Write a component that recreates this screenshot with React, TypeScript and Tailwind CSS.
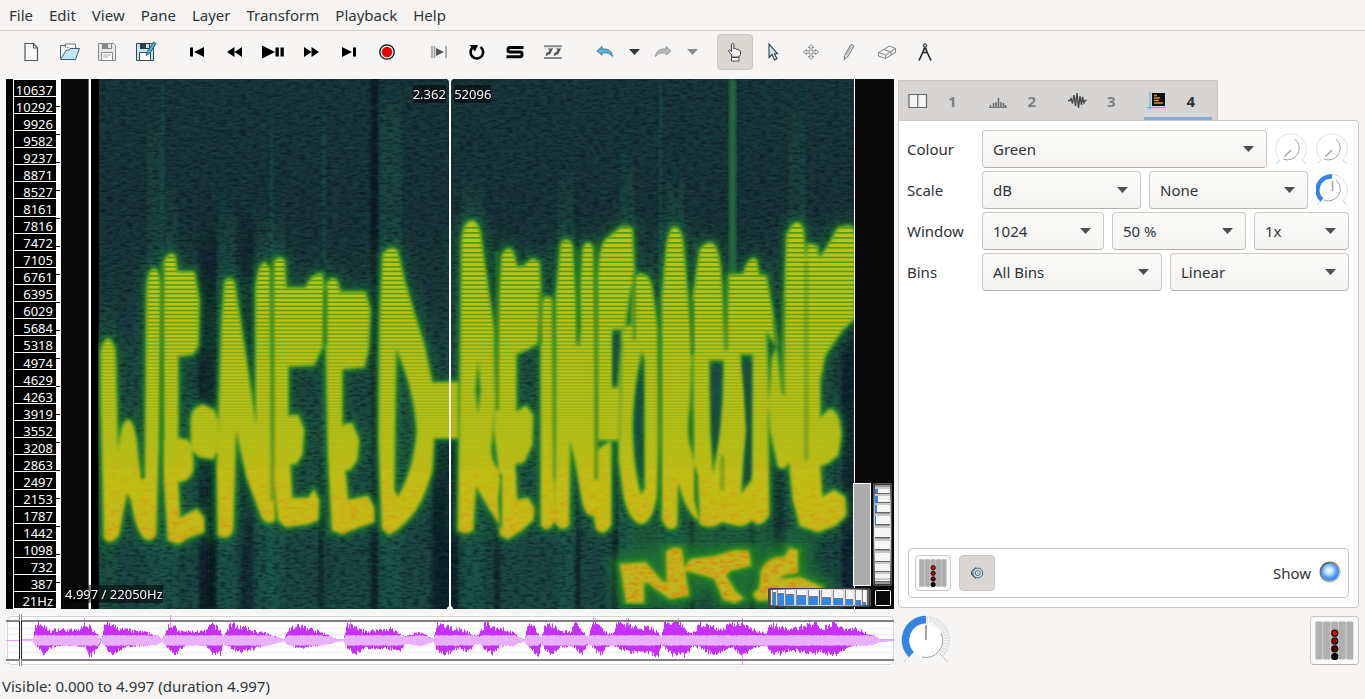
import React from "react";

const LETTERS = [
  "M101 350Q108 328 115 350L118 452Q121 421 128 420Q135 421 138 455L141 480L145 478L147 290Q148 269 154 269Q160 269 161 290L159 430L156 535Q150 543 144 538Q136 530 131 500L127 493Q122 515 119 535Q110 546 104 538L101 400Z",
  "M163 300L164 262Q170 250 175 256L177 272L194 272L199 300L198 345L193 354L178 356L178 438L188 440Q194 450 193 470Q190 481 178 482L180 518L197 509L204 518L204 532L188 538L178 544L168 540L164 480Z",
  "M191 425Q190 407 203 405L214 410L218 420L218 450L213 459L200 457L191 450Z",
  "M218 535L217 470L222 320L225 282Q229 275 234 282L240 320L256 425L256 290Q258 263 265 263L270 268L272 420L275 520Q268 526 262 518L247 478L236 430L233 530Q228 542 218 535Z",
  "M273 300L274 262Q279 255 284 260L286 288L306 288Q312 273 322 274L324 290L323 345L314 365L288 366L288 416L298 415L304 430L302 455L296 464L290 464L292 498L308 498L314 490L319 500L318 520L308 524L286 527L278 520L274 480Z",
  "M326 330L327 284Q332 275 337 281L340 292L365 292L370 310L368 350L364 367L342 369L342 425L352 423L359 440L357 460L350 470L345 470L348 500L368 496L374 508L374 522L362 526L342 534L332 530L328 450Z",
  "M379 440L380 320L383 255Q388 246 397 250L404 280L413 310L424 345L432 383L458 382L458 438L434 438L432 470Q424 500 412 515Q395 534 388 534L382 528ZM396 348L394 490L398 497Q414 470 417 432Q415 390 396 348Z",
  "M458 530L460 400L462 240Q464 221 472 221Q479 221 481 240L488 290L494 330L495 400L492 440Q489 455 495 465L502 475L502 530Q495 516 490 510L476 486L473 530Q466 536 458 530ZM478 360L475 390L478 414L481 390Z",
  "M499 300L502 255Q508 245 513 252L517 268L524 266L532 259L539 262L541 300L538 343L526 350L516 354L516 412L526 406L533 415L532 445L524 462L515 464L517 500L528 498L534 508L533 520L522 530L508 539L500 535L498 500L500 480L494 430Z",
  "M541 320L543 300Q548 293 552 300L555 520Q548 535 541 525Z",
  "M555 522L556 300L561 245Q566 235 572 245L576 300L577 345L581 330L580 290L583 248Q588 238 593 248L596 350L596 440L611 440L611 525Q603 538 596 528L594 515Q588 518 583 505L575 460L570 440L569 525Q562 534 555 522Z",
  "M597 450L597 280Q600 240 608 238L618 230Q625 224 632 229L634 270L632 325L623 327L620 440L612 440L597 450ZM612 329L622 329L618 388L612 388Z",
  "M619 440L621 345L626 320Q630 276 640 274Q650 274 652 290L658 330L660 440L657 495Q652 522 642 524Q630 522 624 498L619 460ZM642 350Q634 380 632 425Q633 470 641 495L645 488L645 360Z",
  "M662 520L662 300L667 245Q670 227 675 227Q681 228 683 245L688 300L692 345L690 400L688 430Q692 460 698 475L700 522Q690 515 684 500L678 482L677 525Q670 535 662 520Z",
  "M694 460L693 300L700 250Q706 241 713 244Q720 250 722 290L725 345L729 275L744 274Q748 257 756 259L759 275L766 276L772 310L777 345L772 360L768 420L769 515Q760 530 752 520Q744 528 735 525L722 522Q710 530 700 524L694 500ZM709 360L724 360L723 400L719 440L713 475L710 430ZM740 354L753 354L752 480L741 494L743 460L746 430L744 390Z",
  "M766 330L776 345L782 395L785 290L787 235Q795 215 803 228L806 262L808 244L817 246L819 259L828 246L838 228L850 226L855 232V318L842 330L825 355L820 380L820 418L830 409Q840 412 841 435L838 455L828 463L820 466L822 497L834 490L845 497L846 515L836 525L818 532L800 526L793 500L789 462Q784 472 778 466L770 430Z",
].join(" ");

// x, top, bottom, opacity of the green gaps where two strokes touch
const SEAMS: [number, number, number, number][] = [
  [162, 262, 440, 0.7], [272, 262, 500, 0.55], [325, 290, 345, 0.8], [497, 250, 410, 0.75], [540, 290, 345, 0.6],
  [554, 300, 480, 0.35], [578, 250, 345, 0.85], [596, 245, 480, 0.7], [634, 275, 340, 0.6], [659, 300, 510, 0.65],
  [692, 300, 355, 0.85], [691, 410, 445, 0.7], [726, 280, 350, 0.7], [783, 300, 395, 0.6], [806, 262, 460, 0.45],
  [775, 320, 350, 0.6], [722, 455, 490, 0.5],
];

const NTS = [
  "M621 565L645 563L660 580L668 585L667 552Q674 546 681 550L684 570L688 595L670 598L648 582L643 582L643 602L627 602Z",
  "M685 570L690 560L715 557L735 551L748 552L750 565L730 570L725 575L735 592L742 598L735 602L724 599L715 578L695 572Z",
  "M760 590L762 570Q770 556 785 558L790 549L797 551L797 572L785 574L775 580L800 578L822 588L822 595L760 600Q752 596 756 592Z",
].join(" ");

const HARMONICS: number[] = [];
for (let y = 227; y < 470; y += Math.max(2, 5.1 - (y - 227) * 0.0125)) HARMONICS.push(y);

// x, width, colour, opacity, top of the vertical bands behind the letters
const BANDS: [number, number, string, number, number][] = [
  [99, 18, "#1f6a3c", 0.25, 300],
  [147, 14, "#1c6a55", 0.25, 130],
  [161, 3, "#1c7058", 0.4, 79],
  [165, 12, "#1c7058", 0.25, 190],
  [199, 18, "#070b12", 0.5, 250],
  [208, 6, "#070b12", 0.5, 470],
  [218, 18, "#1c6a55", 0.3, 210],
  [241, 12, "#070b12", 0.35, 240],
  [257, 28, "#1c6a55", 0.3, 220],
  [270, 3, "#1c6a55", 0.4, 120],
  [322, 4, "#1c6a55", 0.4, 120],
  [319, 6, "#070b12", 0.5, 460],
  [371, 7, "#05080e", 0.5, 30],
  [380, 22, "#1c7058", 0.28, 100],
  [432, 26, "#070b12", 0.5, 430],
  [462, 22, "#1c6a55", 0.3, 180],
  [494, 6, "#070b12", 0.4, 250],
  [558, 16, "#1c6a55", 0.3, 180],
  [576, 4, "#070b12", 0.5, 240],
  [612, 6, "#070b12", 0.5, 440],
  [620, 14, "#1c6a55", 0.3, 160],
  [659, 3, "#1c7058", 0.4, 79],
  [666, 18, "#1c6a55", 0.35, 180],
  [690, 4, "#070b12", 0.5, 280],
  [750, 5, "#070b12", 0.5, 520],
  [788, 18, "#1c7058", 0.22, 110],
  [774, 10, "#070b12", 0.4, 310],
  [842, 12, "#070b12", 0.45, 340],
];

function Spectrogram() {
  return (
    <svg viewBox="61 79 833 530" preserveAspectRatio="none" className="absolute inset-0 h-full w-full" aria-hidden="true">
      <defs>
        <linearGradient id="floor" x1="0" y1="0" x2="0" y2="1">
          <stop offset="0" stopColor="#19353b" />
          <stop offset="0.25" stopColor="#183138" />
          <stop offset="0.6" stopColor="#1a403f" />
          <stop offset="1" stopColor="#1b4643" />
        </linearGradient>
        <linearGradient id="ink" gradientUnits="userSpaceOnUse" x1="0" y1="220" x2="0" y2="605">
          <stop offset="0" stopColor="#bac218" />
          <stop offset="0.6" stopColor="#bfc018" />
          <stop offset="0.8" stopColor="#c4b818" />
          <stop offset="1" stopColor="#d69a16" />
        </linearGradient>
        <linearGradient id="fade" gradientUnits="userSpaceOnUse" x1="0" y1="220" x2="0" y2="470">
          <stop offset="0" stopColor="#fff" stopOpacity="0.95" />
          <stop offset="0.35" stopColor="#fff" stopOpacity="0.8" />
          <stop offset="0.6" stopColor="#fff" stopOpacity="0.35" />
          <stop offset="1" stopColor="#fff" stopOpacity="0.05" />
        </linearGradient>
        <linearGradient id="warmfade" gradientUnits="userSpaceOnUse" x1="0" y1="440" x2="0" y2="530">
          <stop offset="0" stopColor="#fff" stopOpacity="0" />
          <stop offset="1" stopColor="#fff" stopOpacity="1" />
        </linearGradient>
        <mask id="fademask" maskUnits="userSpaceOnUse" x="61" y="79" width="833" height="530">
          <rect x="61" y="79" width="833" height="530" fill="url(#fade)" />
        </mask>
        <mask id="warmmask" maskUnits="userSpaceOnUse" x="61" y="79" width="833" height="530">
          <rect x="61" y="79" width="833" height="530" fill="url(#warmfade)" />
        </mask>
        <clipPath id="lettersclip"><path d={LETTERS} clipRule="evenodd" /></clipPath>
        <clipPath id="ntsclip"><path d={NTS} /></clipPath>
        <clipPath id="data"><rect x="98" y="79" width="757" height="530" /></clipPath>
        <filter id="b1" x="-5%" y="-5%" width="110%" height="110%"><feGaussianBlur stdDeviation="1.4" /></filter>
        <filter id="b3" x="-5%" y="-5%" width="110%" height="110%"><feGaussianBlur stdDeviation="2" /></filter>
        <filter id="b8" x="-10%" y="-10%" width="120%" height="120%"><feGaussianBlur stdDeviation="7" /></filter>
        <filter id="bands" x="-5%" y="-10%" width="110%" height="120%"><feGaussianBlur stdDeviation="1.5 22" /></filter>
        <filter id="grainDark" x="0" y="0" width="100%" height="100%" colorInterpolationFilters="sRGB">
          <feTurbulence type="fractalNoise" baseFrequency="0.15 0.4" numOctaves="2" seed="4" />
          <feColorMatrix values="0 0 0 0 0.03  0 0 0 0 0.05  0 0 0 0 0.1  3 0 0 0 -1.3" />
        </filter>
        <filter id="grainLight" x="0" y="0" width="100%" height="100%" colorInterpolationFilters="sRGB">
          <feTurbulence type="fractalNoise" baseFrequency="0.1 0.3" numOctaves="2" seed="21" />
          <feColorMatrix values="0 0 0 0 0.12  0 0 0 0 0.4  0 0 0 0 0.34  3.4 0 0 0 -1.7" />
        </filter>
        <filter id="grainWarm" x="0" y="0" width="100%" height="100%" colorInterpolationFilters="sRGB">
          <feTurbulence type="fractalNoise" baseFrequency="0.1 0.28" numOctaves="2" seed="9" />
          <feColorMatrix values="0 0 0 0 0.85  0 0 0 0 0.55  0 0 0 0 0.08  4 0 0 0 -1.9" />
        </filter>
      </defs>
      <rect x="61" y="79" width="833" height="530" fill="#0a0a0a" />
      <rect x="88" y="79" width="1" height="530" fill="#6b6b6b" />
      <rect x="89" y="79" width="2" height="530" fill="#fff" />
      <rect x="91" y="79" width="9" height="530" fill="#000" />
      <g clipPath="url(#data)">
        <rect x="99" y="79" width="756" height="530" fill="url(#floor)" />
        <g filter="url(#bands)">
          {BANDS.map(([x, w, c, o, y], i) => (
            <rect key={i} x={x} y={y} width={w} height={670 - y} fill={c} opacity={o} />
          ))}
        </g>
        <path d={LETTERS} fill="none" stroke="#23803a" strokeWidth="20" opacity="0.34" filter="url(#b8)" />
        <rect x="99" y="79" width="756" height="530" filter="url(#grainDark)" opacity="0.46" />
        <rect x="99" y="79" width="756" height="530" filter="url(#grainLight)" opacity="0.22" />
        <path d={NTS} fill="#23852c" stroke="#23852c" strokeWidth="24" opacity="0.6" filter="url(#b8)" />
        <rect x="625" y="530" width="190" height="60" fill="#217a35" opacity="0.4" filter="url(#b8)" />
        <rect x="729" y="79" width="7" height="200" fill="#226b3a" filter="url(#b1)" />
        <path d={LETTERS} fillRule="evenodd" fill="#2f8f1d" stroke="#27862a" strokeWidth="5" filter="url(#b3)" />
        <path d={NTS} fill="#2f8f1d" stroke="#2a8a1e" strokeWidth="8" filter="url(#b3)" />
        <path d={LETTERS} fillRule="evenodd" fill="url(#ink)" filter="url(#b1)" />
        <path d={NTS} fill="#c2b41c" stroke="#c2b41c" strokeWidth="2" filter="url(#b1)" />
        <path d="M711 366h11l-3 64-5 32-2-32zM742 362h9v112l-7 12 3-56zM613 334h6l-3 50h-3zM636 425q0-35 6-60v112q-6-20-6-52z" fill="#1b4a3f" opacity="0.8" filter="url(#b1)" />
        <g clipPath="url(#lettersclip)">
          <g mask="url(#fademask)">
            {HARMONICS.map((y) => (
              <rect key={y} x="99" y={y} width="756" height="1.6" fill="#3f951f" />
            ))}
          </g>
          <g mask="url(#warmmask)">
            <rect x="99" y="440" width="756" height="110" filter="url(#grainWarm)" opacity="0.5" />
          </g>
        </g>
        <g filter="url(#b1)">
          {SEAMS.map(([x, y1, y2, o]) => (
            <rect key={`${x}-${y1}`} x={x - 1.5} y={y1} width="3.5" height={y2 - y1} fill="#2c7d24" opacity={o} />
          ))}
        </g>
        <g clipPath="url(#ntsclip)">
          <rect x="610" y="540" width="230" height="69" filter="url(#grainWarm)" opacity="0.9" />
        </g>
      </g>
      <rect x="854" y="79" width="1" height="530" fill="#fff" />
      <rect x="449" y="79" width="2" height="530" fill="#fff" />
      <path d="M447 79h6l-2 2h-2zM447 609h6v-1l-2-2h-2l-2 2z" fill="#fff" />
    </svg>
  );
}

const FREQS = "10637 10292 9926 9582 9237 8871 8527 8161 7816 7472 7105 6761 6395 6029 5684 5318 4974 4629 4263 3919 3552 3208 2863 2497 2153 1787 1442 1098 732 387 21Hz".split(" ");

function FrequencyRuler() {
  return (
    <div className="flex w-[55px] shrink-0 bg-black">
      <div className="ml-[7px] flex w-[43px] flex-col border-b border-l border-white">
        {FREQS.map((f) => (
          <div key={f} className="flex min-h-0 flex-1 items-center justify-end border-t border-white pt-[3px] pr-[3px] text-[13px] leading-3 text-white">
            {f}
          </div>
        ))}
      </div>
      <svg viewBox="0 0 5 530" preserveAspectRatio="none" className="h-full w-[5px]" aria-hidden="true">
        <rect width="5" height="530" fill="#fff" />
        {Array.from({ length: 18 }, (_, i) => (
          <rect key={i} x="0" y={27 + i * 28} width="4" height="1" fill="#000" />
        ))}
      </svg>
    </div>
  );
}

const HCELLS: [number, number, number][] = [
  [5, 3, 4], [10, 6, 5], [18, 8, 6], [29, 9, 7], [41, 9, 8], [54, 9, 9], [66, 9, 10], [78, 7, 11], [88, 5, 12], [95, 3, 14],
];
const VCELLS: [number, number, number][] = [
  [6, 4, 3], [13, 6, 3], [22, 7, 2], [33, 8, 1], [45, 9, 0], [58, 8, 0], [70, 8, 0], [81, 7, 0], [91, 4, 0], [97, 1, 0],
];

function ZoomWheels() {
  return (
    <svg viewBox="0 0 126 126" className="absolute right-0 bottom-0 h-[126px] w-[126px]" aria-hidden="true">
      <defs>
        <linearGradient id="wheelH"><stop offset="0" stopColor="#444" /><stop offset=".2" stopColor="#aaa" /><stop offset=".5" stopColor="#e8e8e8" /><stop offset=".8" stopColor="#aaa" /><stop offset="1" stopColor="#333" /></linearGradient>
        <linearGradient id="wheelV" x2="0" y2="1"><stop offset="0" stopColor="#333" /><stop offset=".2" stopColor="#aaa" /><stop offset=".5" stopColor="#e8e8e8" /><stop offset=".8" stopColor="#888" /><stop offset="1" stopColor="#333" /></linearGradient>
      </defs>
      <rect x="85" y="0" width="18" height="103" fill="#fff" />
      <rect x="86" y="1" width="16" height="101" fill="#acacac" />
      <rect x="105.500" y="0.500" width="18" height="102" rx="1" fill="url(#wheelV)" stroke="#555" />
      <rect x="107" y="2" width="15" height="99" fill="#999" />
      {VCELLS.map(([y, h, b]) => (
        <g key={y}>
          <rect x="107" y={y - 2} width="15" height={h + 3} fill="#c8c8c8" />
          <rect x="107" y={y} width="15" height={h} fill="#f5f5f4" />
          <rect x="107" y={y} width={b} height={h} fill="#3584e4" />
          <rect x="107" y={y + h} width="15" height="1" fill="#666" />
        </g>
      ))}
      <rect x="0.500" y="105.500" width="102" height="18" rx="1" fill="url(#wheelH)" stroke="#444" />
      <rect x="2" y="107" width="99" height="15" fill="#666" />
      {HCELLS.map(([x, w, b]) => (
        <g key={x}>
          <rect x={x - 2} y="107" width={w + 3} height="15" fill="#ddd" />
          <rect x={x - 1} y="107" width={w + 1} height="15" fill="#8a8a8a" />
          <rect x={x} y="107" width={w} height="15" fill="#f5f5f4" />
          <rect x={x} y={107 + b - 2} width={w} height="1" fill="#777" />
          <rect x={x} y={107 + b - 1} width={w} height={16 - b} fill="#3584e4" />
        </g>
      ))}
      <rect x="107.500" y="107.500" width="15" height="15" rx="1" fill="#0a0a0a" stroke="#fff" />
    </svg>
  );
}

const ENVELOPE: [number, number, number][] = [
  [22, 0.5, 0.5], [32, 0.5, 0.5], [33, 3, 2], [35, 16, 5], [41, 17, 12], [44, 14, 15], [50, 9, 8], [56, 11, 6], [62, 11, 5], [75, 10, 5], [81, 12, 7], [85, 18, 7], [90, 13, 18], [96, 8, 10], [101, 1, 1],
  [105, 18, 8], [112, 15, 15], [118, 12, 10], [130, 10, 7], [145, 8, 5], [155, 5, 4], [162, 1, 1], [168, 16, 8], [175, 13, 15], [178, 9, 12], [185, 9, 5], [205, 9, 5], [212, 17, 13], [220, 10, 15], [223, 3, 3],
  [230, 17, 8], [240, 14, 12], [255, 9, 9], [265, 7, 5], [280, 2, 1], [284, 0.5, 0.5], [288, 12, 5], [300, 15, 8], [315, 10, 6], [330, 4, 3], [336, 1, 1], [343, 0.5, 0.5], [347, 16, 8], [355, 13, 15], [365, 9, 8],
  [390, 12, 9], [400, 6, 12], [405, 4, 3], [420, 8, 5], [433, 1, 1], [437, 16, 12], [445, 14, 15], [460, 11, 8], [468, 8, 13], [475, 4, 3], [480, 8, 3], [485, 18, 10], [492, 13, 15], [500, 13, 6], [512, 8, 5], [520, 2, 2],
  [524, 0.5, 0.5], [528, 17, 8], [533, 14, 12], [538, 6, 17], [541, 3, 3], [545, 17, 10], [552, 15, 15], [560, 9, 7], [570, 9, 6], [575, 17, 8], [582, 8, 16], [588, 4, 3], [593, 18, 8], [600, 13, 17], [605, 8, 8],
  [612, 6, 4], [617, 18, 8], [630, 16, 13], [640, 11, 11], [648, 14, 13], [658, 8, 17], [661, 3, 3], [664, 17, 8], [672, 18, 15], [680, 18, 16], [686, 10, 17], [692, 6, 6], [700, 17, 8], [710, 15, 15], [720, 11, 12],
  [733, 17, 8], [740, 18, 15], [743, 18, 18], [750, 13, 10], [765, 6, 5], [770, 18, 12], [777, 14, 15], [790, 11, 10], [800, 14, 12], [815, 18, 14], [820, 10, 11], [833, 18, 17], [845, 12, 9], [855, 12, 5], [865, 8, 5], [875, 4, 4], [879, 1, 1], [894, 0.5, 0.5],
];

function buildWave() {
  let seed = 7;
  const rnd = () => {
    seed = (seed * 16807) % 2147483647;
    return seed / 2147483647;
  };
  let outer = "";
  let inner = "";
  let k = 0;
  for (let x = 22; x < 894; x++) {
    while (ENVELOPE[k + 1][0] <= x && k < ENVELOPE.length - 2) k++;
    const a = ENVELOPE[k];
    const b = ENVELOPE[k + 1];
    const t = (x - a[0]) / (b[0] - a[0]);
    const up = Math.min(18, (a[1] + (b[1] - a[1]) * t) * (0.72 + 0.42 * rnd()));
    const dn = Math.min(18, (a[2] + (b[2] - a[2]) * t) * (0.7 + 0.4 * rnd()));
    outer += `M${x} ${(640 - up).toFixed(1)}h1V${(640.5 + dn).toFixed(1)}h-1z`;
    const i = Math.min(up, dn + 1, 4.6 + rnd() * 0.8) * 0.95;
    inner += `M${x} ${(640 - i).toFixed(1)}h1V${(640.8 + i).toFixed(1)}h-1z`;
  }
  return { outer, inner };
}
const WAVE = buildWave();
const PEAKS: [number, number][] = [[84, 618], [170, 615], [350, 619], [593, 617], [595, 618], [626, 618], [628, 618], [678, 618], [742, 618]];

function Overview() {
  return (
    <svg viewBox="6 614 888 52" preserveAspectRatio="none" className="h-full w-full" role="img" aria-label="Overview waveform">
      <rect x="6" y="614" width="888" height="52" fill="#fafafa" />
      <rect x="7.500" y="616.500" width="886" height="48" rx="4" fill="#fff" stroke="#d5d5d5" />
      {[628, 634, 646, 652].map((y) => (
        <rect key={y} x="8" y={y - 0.5} width="885" height="2" fill="#f5f4f4" />
      ))}
      <rect x="6" y="640" width="888" height="1" fill="#e3a5fb" />
      {PEAKS.map(([x, y]) => <rect key={x} x={x} y={y} width="1" height="22" fill="#dd8ffc" />)}
      <rect x="742" y="650" width="1" height="15" fill="#dd8ffc" />
      <path d={WAVE.outer} fill="#c72ffc" />
      <path d={WAVE.inner} fill="#e9b0ff" />
      <rect x="6" y="620" width="888" height="2" fill="#808080" />
      <rect x="6" y="659" width="888" height="2" fill="#808080" />
      <rect x="19" y="614" width="3" height="52" fill="#888" />
      <rect x="20" y="614" width="1" height="52" fill="#fff" />
      <rect x="19" y="621" width="1" height="38" fill="#222" />
      <rect x="21" y="621" width="1" height="38" fill="#222" />
    </svg>
  );
}

function SmallDial({ half, label }: { half?: boolean; label: string }) {
  return (
    <button type="button" aria-label={label} className="h-8 w-[33px] shrink-0">
      <svg viewBox="0 0 32 32" className="h-8 w-8" fill="none">
        <path d="M5 27A15.500 15.500 0 1 1 27 27" stroke="#dedede" />
        <path d="M27 27l4 4" stroke="#ccc" />
        <path d="M5 27l-4 4" stroke={half ? "#ccc" : "#b5d4f2"} />
        {half && <path d="M6 26A13.500 13.500 0 0 1 16 2.500" stroke="#3584e4" strokeWidth="4.500" />}
        <circle cx="16.500" cy="17" r="11.500" fill="#fff" />
        <path d="M20 6A11.800 11.800 0 0 1 8 26" stroke="#a5a5a5" />
        <path d={half ? "M16.500 7v10" : "M16 17l-6.500 6.500"} stroke="#aaa5a1" strokeWidth="1.600" />
      </svg>
    </button>
  );
}

function SpeedDial() {
  const pt = (deg: number, r: number) => {
    const a = ((deg - 90) * Math.PI) / 180;
    return `${(24 + r * Math.cos(a)).toFixed(2)} ${(24 + r * Math.sin(a)).toFixed(2)}`;
  };
  return (
    <button type="button" aria-label="Playback speed" className="h-12 w-12">
      <svg viewBox="0 0 48 48" className="h-12 w-12 overflow-visible" fill="none">
        <path d={`M${pt(0, 23.5)}A23.500 23.500 0 0 1 ${pt(135, 23.5)}`} stroke="#dcdcdc" />
        {Array.from({ length: 16 }, (_, i) => (
          <path key={i} d={`M${pt(4 + i * 8, 18)}L${pt(4 + i * 8, 23)}`} stroke="#d9d9d8" />
        ))}
        <path d="M8 40l-6 6M38 38l8 8" stroke="#c9c7c4" />
        <path d={`M${pt(225, 20.5)}A20.500 20.500 0 0 1 ${pt(360, 20.5)}`} stroke="#3584e4" strokeWidth="7.500" />
        <circle cx="24" cy="25" r="16.500" fill="#fff" />
        <path d="M39 17A17 17 0 0 1 20 41" stroke="#a0a0a0" />
        <path d="M24 9v15" stroke="#a8a4a0" strokeWidth="2" />
      </svg>
    </button>
  );
}

function LevelMeter({ className }: { className: string }) {
  return (
    <svg viewBox="0 0 40 40" className={className} aria-hidden="true">
      <rect x="1" y="1" width="38" height="38" fill="#c9c9c9" />
      {[1, 9, 17, 25, 33].map((x) => <rect key={x} x={x - 0.5} y="0.500" width="6.800" height="39" rx="1" fill="#b0b0b0" />)}
      {["#f50000", "#a80000", "#5a0000", "#000"].map((c, i) => (
        <circle key={c} cx="20.300" cy={12.500 + i * 8} r="3.100" fill={c} stroke="#000" strokeWidth="1.200" />
      ))}
    </svg>
  );
}

const I = ({ children }: { children: React.ReactNode }) => (
  <svg viewBox="0 0 24 24" className="h-6 w-6" fill="none" aria-hidden="true">{children}</svg>
);
const GREY = "#555";

type Tool = { name: string; icon: React.ReactNode; active?: boolean; menu?: string };

const Caret = ({ color }: { color: string }) => (
  <svg viewBox="0 0 11 6" className="h-1.5 w-[11px]" aria-hidden="true"><path d="M0 0h11L5.500 6z" fill={color} /></svg>
);

const FloppyBody = ({ fill, stroke, dark }: { fill: string; stroke: string; dark: string }) => (
  <>
    <path d="M3.500 3.500h15l2 2v15h-17z" fill={fill} stroke={stroke} />
    <path d="M7 3h10v6H7z" fill={dark} />
    <rect x="13" y="4" width="3" height="4" fill={fill} />
    <path d="M6.500 12.500h11v8h-11z" fill="#fff" stroke={stroke} />
  </>
);

const GROUPS: Tool[][] = [
  [
    { name: "New Session", icon: <I><path d="M6 3.500h8.500l4 4.500v12.500H6z" fill="#f8f8f8" stroke="#555" strokeWidth="1.200" /><path d="M14.500 3.500V8h4" stroke="#555" /></I> },
    { name: "Open", icon: <I><path d="M3.500 18.500v-13h5l1.500 2h9v4" fill="#eef7fa" stroke="#555" /><path d="M8.500 7v-3h10v5" fill="#fff" stroke="#777" /><path d="M3.500 19.500l5.500-9 3-.5 1-1.500h9.500l-4 11z" fill="#bfe6f3" stroke="#3f5f6b" /></I> },
    { name: "Save", icon: <I><FloppyBody fill="#e8e8e8" stroke="#888" dark="#888" /><path d="M8 15h8M8 17h5" stroke="#aaa" /></I> },
    { name: "Save As", icon: <I><FloppyBody fill="#bfe6f3" stroke="#3b4449" dark="#333b40" /><path d="M13 15.500l1.500-4 6-9.500 2.500 1.500-6 9.500z" fill="#4fb8d8" stroke="#24566a" /></I> },
  ],
  [
    { name: "Rewind to Start", icon: <I><path d="M5 7.500h3v9H5zM19 7v10l-10-5z" fill="#000" /></I> },
    { name: "Rewind", icon: <I><path d="M11.500 7v10L4 12zM19 7v10l-7.500-5z" fill="#000" /></I> },
    { name: "Play / Pause", icon: <I><path d="M1 5.500v13L14 12zM14.500 7.500h3.300v9h-3.300zM19.500 7.500h3.300v9h-3.300z" fill="#000" /></I> },
    { name: "Fast Forward", icon: <I><path d="M5 7v10l7.500-5zM12.500 7v10l7.500-5z" fill="#000" /></I> },
    { name: "Fast Forward to End", icon: <I><path d="M5 7v10l10-5zM16 7.500h3v9h-3z" fill="#000" /></I> },
    { name: "Record", icon: <I><circle cx="12" cy="12" r="7.200" fill="#fff" stroke="#000" strokeWidth="1.300" /><circle cx="12" cy="12" r="5.200" fill="#e60000" /></I> },
  ],
  [
    { name: "Constrain Playback to Selection", icon: <I><path d="M5 6v12M7.500 6v12M19 6v12" stroke="#999" strokeWidth="1.500" /><path d="M9 8v8l8-4z" fill={GREY} /></I> },
    { name: "Loop Playback", icon: <I><path d="M8 7.200A6.300 6.300 0 1 0 15.500 7" stroke="#000" strokeWidth="2.600" /><path d="M4.500 5h8.500L10 11.500z" fill="#000" /></I> },
    { name: "Solo Current Pane", icon: <I><path d="M20.500 7.500H6.700Q5 7.500 5 9.700T6.700 12H17.700Q19 12 19 14.200T17.700 16.700H3.500" stroke="#000" strokeWidth="3" /></I> },
    { name: "Align File Timelines", icon: <I><path d="M3 6.200h18M3 18h18" stroke="#888" strokeWidth="2" /><path d="M6.500 8.500H12L9 14.500H7.500L4.500 16.500l1-4h1.500l1.500-2.500zM15 8.500h5l-3 6h-1.500l-3 2 1-4h1.500l1.500-2.500z" fill={GREY} /></I> },
  ],
  [
    { name: "Undo", menu: "#2e3436", icon: <I><path d="M4 11l5-4.500v2.500c6-.5 10 2 10.500 7.500C17 13 14 12.500 9 13v2z" fill="#4fb8d8" stroke="#255c70" strokeWidth=".8" /></I> },
    { name: "Redo", menu: "#8b8f90", icon: <I><path d="M20 11l-5-4.500v2.500c-6-.5-10 2-10.500 7.500C7 13 10 12.500 15 13v2z" fill="#bbb" stroke="#888" strokeWidth=".8" /></I> },
  ],
  [
    { name: "Navigate", active: true, icon: <I><path d="M8.500 17V14.500l-3-3.500c0-1.500 2-1 3 .5V4.500c0-1.500 2.400-1.500 2.400 0V9c1-1 2.300-.5 2.500.5 1-.7 2-.2 2.200.7 1-.3 1.900.2 1.900 1.300v3L16 17z" fill="#f4f4f4" stroke="#444" /><path d="M8.500 17.500h7.500v3.500H8.500z" fill="#fff" stroke="#444" /></I> },
    { name: "Select", icon: <I><path d="M8 4v13.500l3-3 2.500 5.500 2.500-1.200-2.500-5h3z" fill="#c3e7f7" stroke="#333d45" strokeWidth="1.100" /></I> },
    { name: "Edit", icon: <I><path d="M12 4.500l2.500 3H13V11h3.500V9.500l3 2.500-3 2.500V13H13v3.500h1.500L12 19.500l-2.500-3H11V13H7.500v1.500l-3-2.500 3-2.500V11H11V7.500H9.500z" fill="#f7f7f7" stroke="#777" strokeWidth=".9" /></I> },
    { name: "Draw", icon: <I><path d="M7 19.500l.5-4 6.500-11 3 1.500-6.500 11z" fill="#ddd" stroke="#777" /><path d="M9.500 14.500l5-8" stroke="#aaa" /></I> },
    { name: "Erase", icon: <I><path d="M3.500 12.500l11-6.500 6 2.500v4l-10 6-7-2.500z" fill="#f3f3f3" stroke="#888" strokeWidth="1" /><path d="M3.500 12.500l7 2.500 10-6.500M10.500 15v3.500M9 9.500l7 2.500v3" stroke="#888" strokeWidth="1" /></I> },
    { name: "Measure", icon: <I><circle cx="12" cy="5.500" r="1.700" fill="#ccc" stroke="#222" /><path d="M11.500 7.500L10 12l-4 8.500M12.500 7.500L14 12l4 8.500M9.500 12.500h5" stroke="#222" strokeWidth="1.600" /></I> },
  ],
];

function Toolbar() {
  return (
    <div role="toolbar" aria-label="Main toolbar" className="flex h-[42px] shrink-0 items-center gap-3.5 px-3">
      {GROUPS.map((group, gi) => (
        <div key={gi} className="flex items-center">
          {group.map((t) => (
            <React.Fragment key={t.name}>
              <div className="flex w-[38px] justify-center">
                <button
                  type="button"
                  aria-label={t.name}
                  className={
                    t.active
                      ? "flex h-9 w-9 items-center justify-center rounded-[4px] border border-[#cdc7c2] bg-[#dad6d2]"
                      : "flex h-9 w-9 items-center justify-center"
                  }
                >
                  {t.icon}
                </button>
              </div>
              {t.menu && (
                <button type="button" aria-label={t.name + " history"} className="flex h-9 w-5 items-center justify-center">
                  <Caret color={t.menu} />
                </button>
              )}
            </React.Fragment>
          ))}
        </div>
      ))}
    </div>
  );
}

function Combo({ label, value, className }: { label: string; value: string; className: string }) {
  return (
    <div className={"relative " + className}>
      <select
        aria-label={label}
        defaultValue={value}
        className="h-[38px] w-full appearance-none rounded-[4px] border border-[#cdc7c2] border-b-[#b8b1ab] bg-linear-to-b from-[#fbfbfa] to-[#f4f3f2] pl-2.5 text-[15px] text-[#2e3436]"
      >
        <option>{value}</option>
      </select>
      <span className="pointer-events-none absolute top-4 right-[13px] flex"><Caret color="#4b5052" /></span>
    </div>
  );
}

function Row({ label, children }: { label: string; children: React.ReactNode }) {
  return (
    <div role="group" aria-label={label} className="flex items-center gap-2">
      <span className="w-[67px] shrink-0">{label}</span>
      {children}
    </div>
  );
}

const TAB_ICONS = [
  <svg key="a" viewBox="0 0 20 20" className="h-5 w-5" fill="#f5f5f5"><path d="M1 3.500h17.500v13H1zM9.800 3.500v13" stroke="#666" strokeWidth="1.200" /></svg>,
  <svg key="b" viewBox="0 0 20 20" className="h-5 w-5" fill="none"><path d="M1 16.500h18" stroke="#777" /><path d="M2.500 16v-2M5.500 16v-4M8 16v-5M10.500 16V7M13 16v-5M15.500 16v-4M17.500 16v-2" stroke="#666" strokeWidth="1.500" /></svg>,
  <svg key="c" viewBox="0 0 20 20" className="h-5 w-5" fill="none"><path d="M1 9.500h2l1-2 1.500 5L7 4 8.500 15 10 2l1.500 15L13 5l1.500 9 1-8 1.500 6 1-2.500h1.500" stroke="#444" strokeWidth="1.300" /></svg>,
  <svg key="d" viewBox="0 0 20 20" className="h-5 w-5" fill="none"><path d="M3 1v18M0 16.500h19" stroke="#4cb4d4" /><path d="M5 2h13v13H5z" fill="#111" /><path d="M7 4.500h3M7 7h6M7 9.500h5M7 12h9" stroke="#e08a14" strokeWidth="1.400" /></svg>,
];

function PropertyPanel() {
  return (
    <aside className="flex w-[461px] shrink-0 flex-col pt-px pb-px">
      <div role="tablist" className="flex h-10 w-80 shrink-0 border border-b-0 border-[#cdc7c2] bg-[#d6d5d3]">
        {TAB_ICONS.map((icon, i) => (
          <button
            key={i}
            type="button"
            role="tab"
            aria-selected={i === 3}
            className={"relative flex flex-1 items-center justify-between pt-px pr-[22px] pl-[9px] font-bold " + (i === 3 ? "text-[#2e3436]" : "text-[#7d8081]")}
          >
            <span className="flex">{icon}</span>
            {i + 1}
            {i === 3 && <span className="absolute right-[5px] bottom-0 left-[6px] h-[3px] bg-[#7fabde]" />}
          </button>
        ))}
      </div>
      <div className="flex flex-1 flex-col rounded-[4px] rounded-tl-none border border-[#cdc7c2] bg-white px-2 py-[9px] pr-[9px]">
        <div className="flex flex-col gap-[3px]">
          <Row label="Colour">
            <Combo label="Colour" value="Green" className="flex-1" />
            <SmallDial label="Threshold" />
            <SmallDial label="Colour rotation" />
          </Row>
          <Row label="Scale">
            <Combo label="Scale" value="dB" className="flex-1" />
            <Combo label="Normalization" value="None" className="flex-1" />
            <SmallDial half label="Gain" />
          </Row>
          <Row label="Window">
            <Combo label="Window size" value="1024" className="w-[122px]" />
            <Combo label="Window overlap" value="50 %" className="w-[134px]" />
            <Combo label="Oversampling" value="1x" className="flex-1" />
          </Row>
          <Row label="Bins">
            <Combo label="Bin display" value="All Bins" className="w-[180px]" />
            <Combo label="Frequency scale" value="Linear" className="flex-1" />
          </Row>
        </div>
        <div className="mt-auto ml-px flex h-[50px] items-center gap-2 rounded-[4px] border border-[#cdc7c2] px-1.5">
          <button type="button" aria-label="Layer play level" className="flex h-9 w-9 items-center justify-center rounded-[4px] border border-[#cdc7c2] bg-[#fafafa]">
            <LevelMeter className="h-7 w-7" />
          </button>
          <button type="button" aria-label="Play audio" className="flex h-9 w-9 items-center justify-center rounded-[4px] border border-[#cdc7c2] bg-[#dad6d2]">
            <svg viewBox="0 0 14 14" className="h-3.5 w-3.5" fill="none">
              <path d="M1.500 5.500v3L6 12.500M1.500 5.500L6 1.500" fill="#888" stroke="#3f5058" />
              <circle cx="7.800" cy="7" r="4.900" fill="#cfe3ea" stroke="#4c6570" />
              <circle cx="7.800" cy="7" r="2.500" fill="#eef6f8" stroke="#4c6570" />
              <circle cx="7.800" cy="7" r=".8" fill="#4c6570" />
            </svg>
          </button>
          <label htmlFor="show" className="ml-auto">Show</label>
          <span className="relative flex h-6 w-[23px]">
            <input id="show" type="checkbox" defaultChecked className="absolute inset-0 opacity-0" />
            <svg viewBox="0 0 24 24" className="pointer-events-none h-[23px] w-[23px] shrink-0" aria-hidden="true">
              <defs>
                <radialGradient id="led" cx=".45" cy=".42" r=".55"><stop offset="0" stopColor="#fff" /><stop offset=".4" stopColor="#b9dcff" /><stop offset=".7" stopColor="#5aa7ff" /><stop offset="1" stopColor="#3584f4" /></radialGradient>
                <linearGradient id="rim" x2="1" y2="1"><stop offset="0" stopColor="#444" /><stop offset="1" stopColor="#ddd" /></linearGradient>
              </defs>
              <circle cx="11.500" cy="11.500" r="11" fill="url(#rim)" />
              <circle cx="11.500" cy="11.500" r="9.200" fill="url(#led)" />
            </svg>
          </span>
        </div>
      </div>
    </aside>
  );
}

const MENUS = ["File", "Edit", "View", "Pane", "Layer", "Transform", "Playback", "Help"];
const READOUT = "absolute bg-black/50 text-[13px] leading-[18px] text-white [text-shadow:0_0_1px_#000,1px_1px_1px_#000]";

export default function App() {
  return (
    <div className="flex h-screen min-h-[640px] min-w-[1000px] flex-col bg-[#f6f5f4] font-['Noto_Sans',sans-serif] text-[15px] text-[#2e3436]">
      <nav aria-label="Menu bar" className="flex h-[31px] shrink-0 items-center border-b border-[#cfcdca] pl-px">
        {MENUS.map((m) => (
          <button key={m} type="button" className="px-2">{m}</button>
        ))}
      </nav>
      <Toolbar />
      <main className="mt-1.5 flex min-h-0 flex-1 gap-1 pr-1.5 pl-1.5">
        <section aria-label="Spectrogram" className="flex min-w-0 flex-1">
          <FrequencyRuler />
          <div className="relative min-w-0 flex-1 overflow-hidden">
            <Spectrogram />
            <span className={READOUT + " top-1.5 right-[53.800%]"}>2.362</span>
            <span className={READOUT + " top-1.5 left-[47.200%]"}>52096</span>
            <span className={READOUT + " bottom-1.5 left-1"}>4.997 / 22050Hz</span>
            <ZoomWheels />
          </div>
        </section>
        <PropertyPanel />
      </main>
      <div className="mt-[5px] flex h-[52px] shrink-0 gap-1 px-1.5">
        <div className="min-w-0 flex-1"><Overview /></div>
        <div className="flex w-[461px] shrink-0 items-center justify-between pl-1">
          <SpeedDial />
          <button type="button" aria-label="Master level" className="flex h-[49px] w-[49px] items-center justify-center rounded-[4px] border border-[#cdc7c2] border-b-[#b8b1ab] bg-[#fafafa]">
            <LevelMeter className="h-[39px] w-[39px]" />
          </button>
        </div>
      </div>
      <footer className="flex h-[33px] shrink-0 items-center pt-2 pl-0.5">Visible: 0.000 to 4.997 (duration 4.997)</footer>
    </div>
  );
}
